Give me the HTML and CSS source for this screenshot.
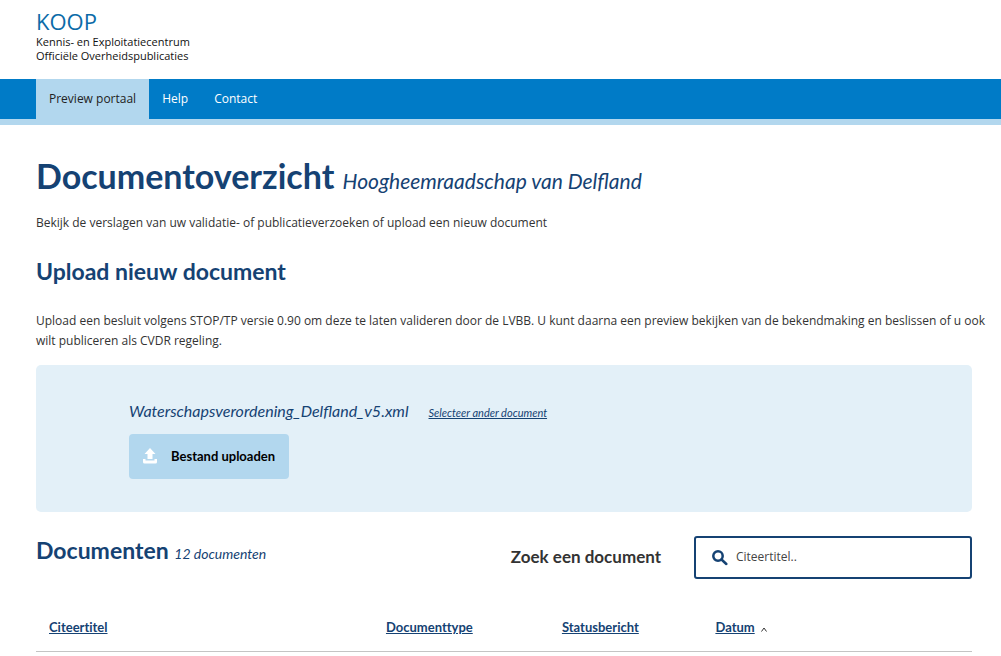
FILE: index.html
```html
<!DOCTYPE html>
<html lang="nl">
<head>
<meta charset="utf-8">
<meta name="viewport" content="width=device-width, initial-scale=1">
<title>Documentoverzicht</title>
<link rel="stylesheet" href="styles.css">
</head>
<body>
<header class="header">
  <div class="logo">
    <p class="logo-name">KOOP</p>
    <p class="logo-text">Kennis- en Exploitatiecentrum<br>Officiële Overheidspublicaties</p>
  </div>
</header>
<nav class="nav">
  <a class="nav-link nav-link-active" href="#">Preview portaal</a>
  <a class="nav-link" href="#">Help</a>
  <a class="nav-link" href="#">Contact</a>
</nav>
<main class="main">
  <h1 class="title">Documentoverzicht <span class="title-sub">Hoogheemraadschap van Delfland</span></h1>
  <p class="lead">Bekijk de verslagen van uw validatie- of publicatieverzoeken of upload een nieuw document</p>
  <h2 class="subtitle">Upload nieuw document</h2>
  <p class="intro">Upload een besluit volgens STOP/TP versie 0.90 om deze te laten valideren door de LVBB. U kunt daarna een preview bekijken van de bekendmaking en beslissen of u ook wilt publiceren als CVDR regeling.</p>
  <section class="upload">
    <p class="file"><span class="file-name">Waterschapsverordening_Delfland_v5.xml</span> <a class="file-change" href="#">Selecteer ander document</a></p>
    <button class="upload-button" type="button">
      <svg class="upload-icon" viewBox="0 0 14 16" aria-hidden="true"><path d="M7 0 12.500 6H9.500V11H4.500V6H1.500ZM0 11H2.500V12.500H11.500V11H14V14Q14 15.500 12.500 15.500H1.500Q0 15.500 0 14Z"/></svg>
      Bestand uploaden
    </button>
  </section>
  <div class="list-head">
    <h2 class="subtitle">Documenten <span class="count">12 documenten</span></h2>
    <form class="search">
      <label class="search-label" for="q">Zoek een document</label>
      <div class="search-field">
        <svg class="search-icon" viewBox="0 0 16 16" aria-hidden="true"><circle cx="6" cy="6" r="4.700"/><path d="m9.500 9.500 4.800 4.500"/></svg>
        <input class="search-input" id="q" type="text" placeholder="Citeertitel..">
      </div>
    </form>
  </div>
  <table class="table">
    <thead>
      <tr>
        <th class="col-title" scope="col"><a href="#">Citeertitel</a></th>
        <th class="col-type" scope="col"><a href="#">Documenttype</a></th>
        <th class="col-status" scope="col"><a href="#">Statusbericht</a></th>
        <th scope="col"><a href="#">Datum</a><svg class="sort-icon" viewBox="0 0 6 5" aria-hidden="true"><path d="m.5 4.500 2.500-3.500 2.500 3.500"/></svg></th>
      </tr>
    </thead>
  </table>
</main>
</body>
</html>
```
FILE: styles.css
```css
* { box-sizing: border-box; }
body {
  margin: 0;
  background: #fff;
  color: #333;
  font: 12px/20px "Open Sans", sans-serif;
}
h1, h2, p { margin: 0; }
.header { padding: 7px 36px 16px; }
.logo { color: #111; }
.logo-name { color: #0b6ba8; font-size: 22px; line-height: 28px; }
.logo-text { font-size: 11px; line-height: 14px; }
.nav {
  display: flex;
  padding: 0 36px;
  background: #007bc7;
  border-bottom: 6px solid #b2d7ee;
}
.nav-link { padding: 10px 13px; color: #fff; text-decoration: none; }
.nav-link-active { background: #b2d7ee; color: #222; }
.main { padding: 27px 29px 0 36px; }
.title, .subtitle, .file, .search-label, .table { font-family: Lato, sans-serif; }
.title { color: #154273; font-size: 34px; line-height: 48px; }
.title-sub, .count { line-height: 1; }
.title-sub, .count, .file { font-style: italic; font-weight: 400; }
.title-sub { font-size: 21px; }
.lead { margin-top: 13px; }
.subtitle { color: #154273; font-size: 23px; line-height: 32px; }
.lead + .subtitle { margin-top: 22px; }
.intro { margin: 24px -20px 14px 0; }
.upload {
  padding: 33px 93px 33px;
  background: #e3f0f8;
  border-radius: 5px;
}
.file { display: flex; align-items: baseline; gap: 20px; color: #154273; }
.file-name { font-size: 16px; line-height: 26px; }
.file-change { color: #154273; font-size: 11px; }
.upload-button {
  display: flex;
  align-items: center;
  gap: 14px;
  height: 45px;
  margin-top: 10px;
  padding: 0 14px 2px;
  background: #b2d7ee;
  border: 0;
  border-radius: 4px;
  color: #000;
  font: bold 13px/20px Lato, sans-serif;
}
.upload-icon { width: 14px; height: 16px; fill: #fff; }
.list-head {
  display: flex;
  justify-content: space-between;
  align-items: flex-start;
  padding-top: 24px;
}
.list-head .subtitle { line-height: 28px; }
.count { font-size: 14px; }
.search { display: flex; align-items: center; gap: 33px; }
.search-label { padding-bottom: 2px; font-size: 17px; font-weight: 700; }
.search-field {
  display: flex;
  align-items: center;
  gap: 8px;
  width: 278px;
  height: 43px;
  padding: 0 16px;
  border: 2px solid #154273;
  border-radius: 3px;
}
.search-icon { width: 16px; height: 16px; fill: none; stroke: #154273; stroke-width: 2.500; stroke-linecap: round; }
.search-input {
  flex: 1;
  min-width: 0;
  padding: 0 0 2px;
  border: 0;
  outline: 0;
  background: none;
  color: #333;
  font: inherit;
}
.search-input::placeholder { color: #444; opacity: 1; }
.table { width: 100%; margin-top: 25px; border-collapse: collapse; table-layout: fixed; font-size: 13px; font-variant-ligatures: none; }
.table th { padding: 13px 13px 14px; border-bottom: 1px solid #c4c4c4; text-align: left; }
.table a { color: #154273; }
.col-title { width: 36%; }
.col-type { width: 18.800%; }
.col-status { width: 16.400%; }
.sort-icon { width: 6px; height: 5px; margin-left: 6px; fill: none; stroke: #333; }
```
